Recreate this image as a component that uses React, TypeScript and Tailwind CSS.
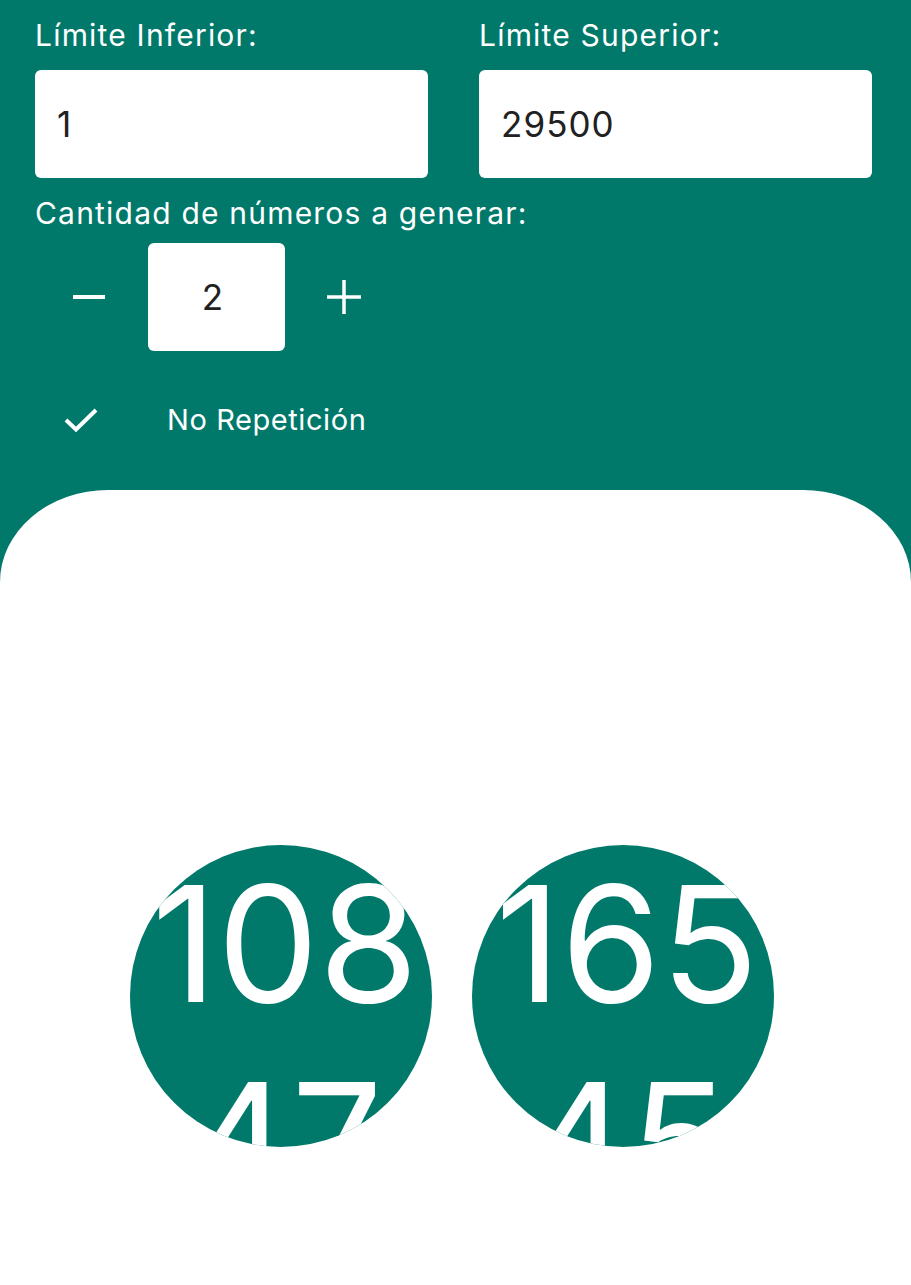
import { useState } from "react";

const font = { fontFamily: "Inter, 'Noto Sans', sans-serif" };

function Circle({ value }: { value: number }) {
  return (
    <div className="w-[302px] h-[302px] rounded-full overflow-hidden bg-[#00796b] pl-[8px] text-white text-center break-all text-[161px] leading-[197px]">
      {value}
    </div>
  );
}

export default function App() {
  const [min, setMin] = useState("1");
  const [max, setMax] = useState("29500");
  const [count, setCount] = useState(2);
  const [noRepeat, setNoRepeat] = useState(true);
  const results = [10847, 16545];

  return (
    <div className="flex flex-col h-[1285px] bg-[#00796b]" style={font}>
      <div className="pl-[35px] pr-[39px] pt-[17px] text-white">
        <div className="grid grid-cols-2 gap-x-[51px]">
          <div>
            <label className="block text-[30px] leading-[36px] tracking-[0.04em]">Límite Inferior:</label>
            <input
              value={min}
              onChange={(e) => setMin(e.target.value)}
              className="mt-[17px] w-full h-[108px] rounded-md bg-white px-[22px] text-[35px] tracking-[0.03em] text-[#212121] outline-none"
            />
          </div>
          <div>
            <label className="block text-[30px] leading-[36px] tracking-[0.04em]">Límite Superior:</label>
            <input
              value={max}
              onChange={(e) => setMax(e.target.value)}
              className="mt-[17px] w-full h-[108px] rounded-md bg-white px-[22px] text-[35px] tracking-[0.03em] text-[#212121] outline-none"
            />
          </div>
        </div>

        <p className="mt-[17px] text-[30px] leading-[36px] tracking-[0.04em]">Cantidad de números a generar:</p>

        <div className="mt-[12px] flex items-center gap-[42px] pl-[37px]">
          <button onClick={() => setCount(Math.max(1, count - 1))} className="w-[34px] h-[34px]">
            <svg viewBox="0 0 34 34" className="w-[34px] h-[34px]">
              <line x1="1" y1="17" x2="33" y2="17" stroke="white" strokeWidth="4" />
            </svg>
          </button>
          <div className="w-[137px] h-[108px] rounded-md bg-white flex items-center justify-center pr-[8px] text-[35px] text-[#212121]">
            {count}
          </div>
          <button onClick={() => setCount(count + 1)} className="w-[34px] h-[34px]">
            <svg viewBox="0 0 34 34" className="w-[34px] h-[34px]">
              <line x1="0" y1="17" x2="34" y2="17" stroke="white" strokeWidth="3.5" />
              <line x1="17" y1="0" x2="17" y2="34" stroke="white" strokeWidth="3.5" />
            </svg>
          </button>
        </div>

        <div className="mt-[51px] flex items-center">
          <button onClick={() => setNoRepeat(!noRepeat)} className="ml-[29px] w-[34px] h-[24px]">
            {noRepeat && (
              <svg viewBox="0 0 34 24" className="w-[34px] h-[24px]">
                <polyline points="2,12 12,21.5 32,2" fill="none" stroke="white" strokeWidth="4" />
              </svg>
            )}
          </button>
          <span className="ml-[69px] text-[29px] leading-[36px] tracking-[0.02em]">No Repetición</span>
        </div>
      </div>

      <div className="mt-[52px] flex-1 bg-white rounded-tl-[108px_92px] rounded-tr-[108px_92px] pt-[355px]">
        <div className="flex justify-center gap-[40px] pr-[7px]">
          {results.map((n) => (
            <Circle key={n} value={n} />
          ))}
        </div>
      </div>
    </div>
  );
}
